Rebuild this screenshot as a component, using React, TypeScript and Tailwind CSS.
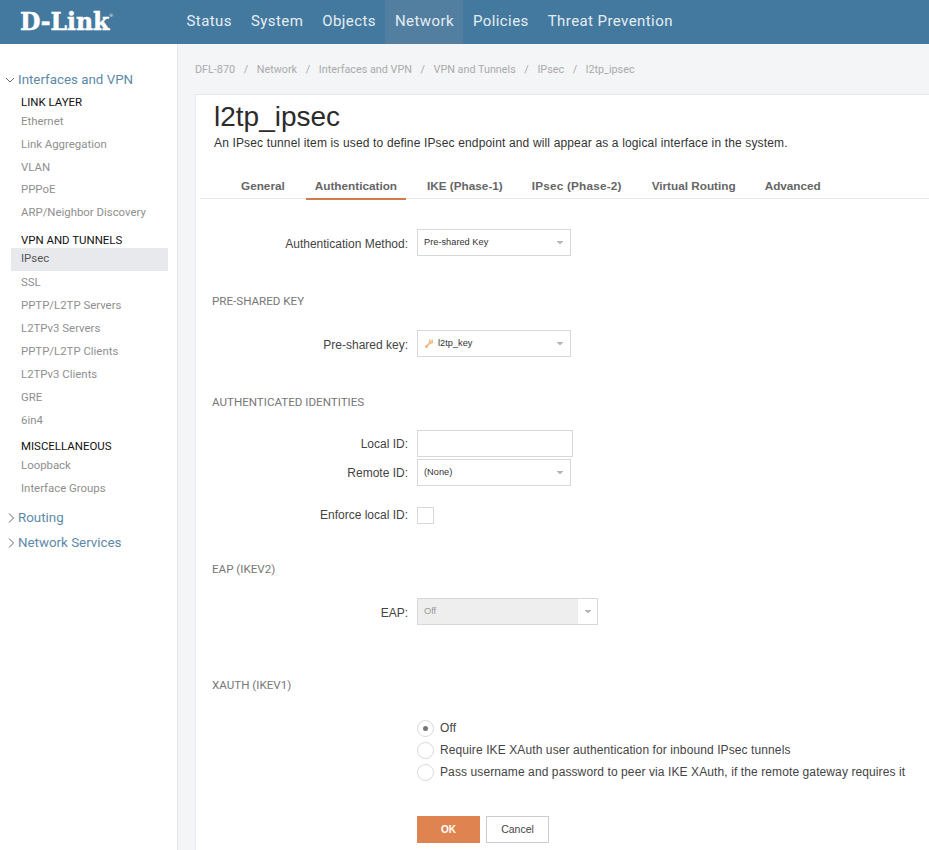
import React from "react";

const A = "font-['Liberation_Sans',Arial,sans-serif]";
const R = "font-['Roboto',sans-serif]";

function Chevron({ open }: { open?: boolean }) {
  return (
    <svg width="10" height="10" viewBox="0 0 10 10" fill="none" stroke="#666666" strokeWidth="1" className="shrink-0">
      {open ? <path d="M1 3 L5 7 L9 3" /> : <path d="M1 0.5 L5.5 5 L1 9.5" />}
    </svg>
  );
}

function Caret() {
  return (
    <svg width="6" height="3" viewBox="0 0 6 3" className="shrink-0">
      <path d="M0 0 H6 V0.6 L3.5 3 H2.5 L0 0.6 Z" fill="#b5b5b5" />
    </svg>
  );
}

function Item({ t, h = "h-[23px]", pb = "pb-[2px]", cls = "", active }: { t: string; h?: string; pb?: string; cls?: string; active?: boolean }) {
  return (
    <div className={`${h} ${pb} ${cls} flex items-center pl-[10px] text-[11.4px] ${active ? "bg-[#e8e9ed] text-[#555555]" : "text-[#8f8f8f]"}`}>{t}</div>
  );
}

function Head({ t, cls }: { t: string; cls: string }) {
  return <div className={`${cls} pl-[10px] text-[11.45px] leading-[14px] text-[#111111]`}>{t}</div>;
}

function Select({ children, w = "w-[154px]", disabled }: { children: React.ReactNode; w?: string; disabled?: boolean }) {
  return (
    <div className={`${w} h-[27px] flex border border-[#d8d8d8] ${disabled ? "" : "bg-white"}`}>
      <div className={`flex-1 flex items-center pl-[6px] text-[9.25px] ${disabled ? "bg-[#eeeeee] text-[#999999]" : "text-[#333333]"} ${A}`}>{children}</div>
      <div className={`${disabled ? "w-[19px]" : "w-[20px]"} flex items-center justify-center`}>
        <Caret />
      </div>
    </div>
  );
}

function Row({ label, children, cls, lc = "" }: { label: string; children: React.ReactNode; cls: string; lc?: string }) {
  return (
    <div className={`flex items-center ${cls}`}>
      <div className={`w-[217px] pr-[9px] text-right text-[12px] text-[#444444] ${lc} ${A}`}>{label}</div>
      {children}
    </div>
  );
}

function Section({ t, cls }: { t: string; cls: string }) {
  return <div className={`${cls} pl-[12px] text-[11.6px] leading-[14px] text-[#777777] ${R}`}>{t}</div>;
}

function Radio({ t, on }: { t: string; on?: boolean }) {
  return (
    <div className="flex items-center h-[22px]">
      <div className="w-[17px] h-[17px] rounded-full border border-[#d8d8d8] bg-white flex items-center justify-center">
        {on && <div className="w-[5px] h-[5px] rounded-full bg-[#777777]" />}
      </div>
      <div className={`ml-[6px] text-[12px] tracking-[0.1px] whitespace-nowrap text-[#444444] ${A}`}>{t}</div>
    </div>
  );
}

export default function App() {
  const crumbs = ["DFL-870", "Network", "Interfaces and VPN", "VPN and Tunnels", "IPsec", "l2tp_ipsec"];
  const nav = ["Status", "System", "Objects", "Network", "Policies", "Threat Prevention"];
  const tabClass: Record<string, string> = {
    General: "px-[10px] mr-[11px]",
    Authentication: "border-b-2 border-[#cf7c4b] px-[9px] mr-[11px]",
    "IKE (Phase-1)": "px-[10px] mr-[9px]",
    "IPsec (Phase-2)": "px-[10px] mr-[10px] tracking-[0.2px]",
    "Virtual Routing": "px-[10px] mr-[9px]",
    Advanced: "px-[10px]",
  };
  return (
    <div className={`w-[929px] h-[850px] overflow-hidden flex flex-col bg-white ${R}`}>
      <header className="h-[44px] shrink-0 flex bg-[#44799f]">
        <div className="w-[177px] pl-[20px] pt-[1px] flex items-center">
          <span className="font-['DejaVu_Serif',serif] font-bold text-[23.5px] leading-none text-white [-webkit-text-stroke:0.5px_white]">D-Link</span>
          <span className="self-start mt-[13px] text-[4px] leading-none text-white">®</span>
        </div>
        <nav className="flex text-[15px] tracking-[0.42px] text-[#e4edf3]">
          {nav.map((n) => (
            <div key={n} className={`h-[44px] flex items-center px-[9.5px] pb-[2px] ${n === "Network" ? "bg-[#527f9f]" : ""}`}>{n}</div>
          ))}
        </nav>
      </header>
      <div className="flex-1 flex min-h-0">
        <aside className="w-[178px] shrink-0 border-r border-[#e6e7ea] bg-white pl-[11px] pr-[9px]">
          <div className="flex items-center h-[15px] mt-[28px] -ml-[6px] gap-[3px] text-[13.35px] text-[#5d8aa8]">
            <Chevron open />
            <span>Interfaces and VPN</span>
          </div>
          <Head t="LINK LAYER" cls="mt-[8px] mb-[2px]" />
          <Item t="Ethernet" />
          <Item t="Link Aggregation" />
          <Item t="VLAN" />
          <Item t="PPPoE" h="h-[22px]" />
          <Item t="ARP/Neighbor Discovery" />
          <Head t="VPN AND TUNNELS" cls="mt-[8px] mb-[1px]" />
          <Item t="IPsec" active />
          <Item t="SSL" pb="pb-0" />
          <Item t="PPTP/L2TP Servers" pb="pb-0" />
          <Item t="L2TPv3 Servers" pb="pb-0" />
          <Item t="PPTP/L2TP Clients" pb="pb-0" />
          <Item t="L2TPv3 Clients" pb="pb-0" />
          <Item t="GRE" pb="pb-0" />
          <Item t="6in4" pb="pb-0" />
          <Head t="MISCELLANEOUS" cls="mt-[7px]" />
          <Item t="Loopback" cls="mt-[2px]" />
          <Item t="Interface Groups" />
          <div className="flex items-center h-[15px] mt-[9px] -ml-[3px] text-[13.35px] text-[#5d8aa8]">
            <Chevron />
            <span>Routing</span>
          </div>
          <div className="flex items-center h-[15px] mt-[10px] -ml-[3px] text-[13.35px] text-[#5d8aa8]">
            <Chevron />
            <span>Network Services</span>
          </div>
        </aside>
        <main className="flex-1 min-w-0 bg-[#f4f5f7] pl-[17px]">
          <div className="h-[50px] flex items-start pt-[20px] text-[10.8px] leading-[12px] text-[#aaaaaa]">
            {crumbs.map((c, i) => (
              <React.Fragment key={c}>
                {i > 0 && <span className="mx-[8.6px]">/</span>}
                <span>{c}</span>
              </React.Fragment>
            ))}
          </div>
          <section className="h-[760px] bg-white border-l border-t border-[#e8e9ec] pl-[4px]">
            <h1 className={`pl-[14px] mt-[5px] text-[28px] leading-[34px] font-normal text-[#2b2b2b] ${A}`}>l2tp_ipsec</h1>
            <p className={`pl-[14px] mt-[1px] text-[12px] tracking-[0.15px] leading-[16px] text-[#333333] ${A}`}>An IPsec tunnel item is used to define IPsec endpoint and will appear as a logical interface in the system.</p>
            <div className={`mt-[28px] h-[20px] flex border-b border-[#e8e9ec] pl-[31px] text-[11.75px] font-bold text-[#666666] ${A}`}>
              {Object.keys(tabClass).map((t) => (
                <div key={t} className={`h-[21px] whitespace-nowrap leading-[14px] ${tabClass[t]}`}>{t}</div>
              ))}
            </div>
            <Row label="Authentication Method:" cls="mt-[30px]" lc="pt-[2px]">
              <Select>Pre-shared Key</Select>
            </Row>
            <Section t="PRE-SHARED KEY" cls="mt-[38px]" />
            <Row label="Pre-shared key:" cls="mt-[22px]" lc="pt-[2px]">
              <Select>
                <svg width="8" height="9" viewBox="0 0 8 9" className="ml-[1px] mr-[5px] shrink-0">
                  <path d="M4 0.5 H5.5 V2.5 H6.3 V0.5 H8 V4 L6 5 H5 L2.2 8.5 H0.5 V7 L3.8 3.6 Z" fill="#f0c08e" />
                  <path d="M0.5 6.8 L2.4 6.8 L2.2 8.5 H0.5 Z" fill="#e2974f" />
                </svg>
                l2tp_key
              </Select>
            </Row>
            <Section t="AUTHENTICATED IDENTITIES" cls="mt-[38px]" />
            <Row label="Local ID:" cls="mt-[21px]">
              <div className="w-[156px] h-[27px] border border-[#d8d8d8] bg-white" />
            </Row>
            <Row label="Remote ID:" cls="mt-[2px]">
              <Select>(None)</Select>
            </Row>
            <Row label="Enforce local ID:" cls="mt-[20px]">
              <div className="w-[17px] h-[17px] border border-[#d8d8d8] bg-white" />
            </Row>
            <Section t="EAP (IKEV2)" cls="mt-[38px]" />
            <Row label="EAP:" cls="mt-[22px]" lc="pt-[2px]">
              <Select w="w-[181px]" disabled>Off</Select>
            </Row>
            <Section t="XAUTH (IKEV1)" cls="mt-[53px]" />
            <div className="ml-[217px] mt-[25px]">
              <Radio t="Off" on />
              <Radio t="Require IKE XAuth user authentication for inbound IPsec tunnels" />
              <Radio t="Pass username and password to peer via IKE XAuth, if the remote gateway requires it" />
            </div>
            <div className={`ml-[217px] mt-[33px] flex gap-[6px] ${A}`}>
              <button className="w-[63px] h-[27px] bg-[#df8450] text-[10px] font-bold text-white">OK</button>
              <button className="w-[63px] h-[27px] bg-white border border-[#cccccc] text-[10.5px] text-[#444444]">Cancel</button>
            </div>
          </section>
        </main>
      </div>
    </div>
  );
}
